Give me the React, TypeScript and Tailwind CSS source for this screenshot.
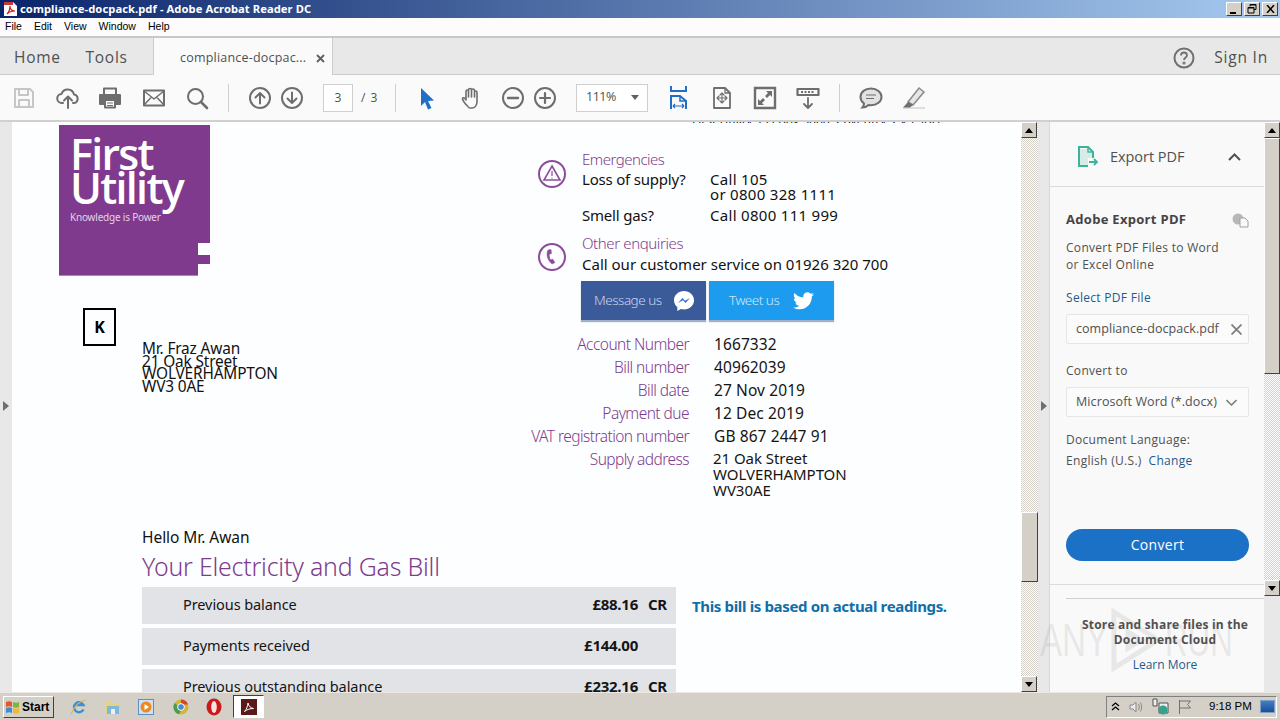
import React from "react";

const ui = "font-['Open_Sans',sans-serif]";
const doc = "font-['Noto_Sans',sans-serif]";

function Tb({ children, w = 24 }: { children: React.ReactNode; w?: number }) {
  return (
    <svg width={w} height="24" viewBox="0 0 24 24" fill="none" stroke="#6e6e6e" strokeWidth="2" strokeLinecap="round" strokeLinejoin="round" className="shrink-0">
      {children}
    </svg>
  );
}

function WinBtn({ children }: { children: React.ReactNode }) {
  return (
    <div className="w-4 h-[14px] bg-[#d4d0c8] border border-t-white border-l-white border-r-[#404040] border-b-[#404040] flex items-center justify-center">
      {children}
    </div>
  );
}

function ScrollBtn({ up }: { up?: boolean }) {
  return (
    <div className="w-[16px] h-[16px] shrink-0 bg-[#d4d0c8] border border-t-white border-l-white border-r-[#404040] border-b-[#404040] flex items-center justify-center">
      <svg width="8" height="5" viewBox="0 0 8 5"><path d={up ? "M4 0 L8 5 L0 5Z" : "M0 0 L8 0 L4 5Z"} fill="#000" /></svg>
    </div>
  );
}

const track = "bg-[repeating-conic-gradient(#d4d0c8_0_25%,#ffffff_0_50%)] bg-[length:2px_2px]";

function Row({ label, value, cr }: { label: string; value: string; cr?: boolean }) {
  return (
    <div className="h-[37px] shrink-0 bg-[#e1e3e6] flex items-center pb-[2px] text-[14.5px] text-[#151515] pl-[41px]">
      <span className="flex-1 tracking-[-0.08px]">{label}</span>
      <span className="font-bold text-[15px] tracking-[-0.25px] w-[62px] text-right whitespace-nowrap">{value}</span>
      <span className="font-bold text-[15px] w-[38px] pl-[10px] tracking-[-0.3px]">{cr ? "CR" : ""}</span>
    </div>
  );
}

function Info({ label, value }: { label: string; value: React.ReactNode }) {
  return (
    <div className="flex">
      <div className="w-[159px] text-right text-[#7d3c8c] tracking-[-0.55px] font-light">{label}</div>
      <div className="ml-[25px] text-[#151515] tracking-[0.1px]">{value}</div>
    </div>
  );
}

function App() {
  return (
    <div className="w-[1280px] h-[720px] overflow-hidden flex flex-col bg-[#d4d0c8] relative">
      {/* Title bar */}
      <div className="h-[18px] shrink-0 bg-[linear-gradient(90deg,#0a246a,#a6caf0)] flex items-center pl-[3px] pr-[2px]">
        <svg width="15" height="16" viewBox="0 0 15 16" className="mr-[2px] shrink-0">
          <path d="M1 1h9l4 4v10H1z" fill="#fff" />
          <path d="M1 1h9v3H1z" fill="#c43a3a" />
          <path d="M4 13c2-2 3-5 3-8 0 3 2 5 5 5-3 0-6 1-8 3z" fill="none" stroke="#c8201e" strokeWidth="1.2" />
        </svg>
        <div className="flex-1 text-white font-bold text-[11.2px] tracking-[0.07px] font-['Noto_Sans',sans-serif] whitespace-nowrap leading-[18px]">
          compliance-docpack.pdf - Adobe Acrobat Reader DC
        </div>
        <div className="flex">
          <WinBtn><div className="w-[6px] h-[2px] bg-black mt-[7px] mr-[2px]" /></WinBtn>
          <div className="w-[2px]" />
          <WinBtn>
            <svg width="10" height="10" viewBox="0 0 10 10" fill="none" stroke="#000"><path d="M3 2.5V.5h6v5H7" /><path d="M1 3.5h6v5.5H1z" /><path d="M3 1h6M1 4h6" /></svg>
          </WinBtn>
          <div className="w-[2px]" />
          <WinBtn>
            <svg width="9" height="8" viewBox="0 0 9 8" fill="none" stroke="#000" strokeWidth="1.5"><path d="M1 0l7 8M8 0L1 8" /></svg>
          </WinBtn>
        </div>
      </div>

      {/* Menu bar */}
      <div className="h-[20px] shrink-0 bg-[#fdfbfb] border-b-2 border-[#c8c8c8] flex items-center pl-[5px] text-[10.5px] text-black font-['Liberation_Sans',sans-serif] gap-[12px]">
        <span>File</span><span>Edit</span><span>View</span><span>Window</span><span>Help</span>
      </div>

      {/* Tabs */}
      <div className={`h-[37px] shrink-0 bg-[#e8e8e8] border-b border-[#cdcdcd] flex items-stretch ${ui} relative`}>
        <div className="w-[154px] flex items-center pl-[14px] pt-[4px] gap-[25px] text-[15.5px] text-[#505050] tracking-[0.7px] border-r border-[#cdcdcd]">
          <span>Home</span><span>Tools</span>
        </div>
        <div className="w-[179px] h-[37px] bg-[#fafafa] border-r border-[#cdcdcd] flex items-center pl-[26px] pt-[4px] text-[12.5px] text-[#505050] tracking-[0.2px]">
          <span className="w-[136px] whitespace-nowrap">compliance-docpac...</span>
          <svg width="9" height="9" viewBox="0 0 9 9" stroke="#606060" strokeWidth="1.8"><path d="M1 1l7 7M8 1L1 8" /></svg>
        </div>
        <div className="flex-1 flex items-center justify-end pr-[12px] pt-[4px] gap-[19px]">
          <svg width="22" height="22" viewBox="0 0 22 22" fill="none" stroke="#707070" strokeWidth="2"><circle cx="11" cy="11" r="9.5" /><path d="M8 8.5c0-4 6-4 6 0 0 2-3 2-3 4.5" strokeWidth="1.8" /><circle cx="11" cy="16" r=".6" /></svg>
          <span className="text-[15.5px] text-[#505050] tracking-[0.8px]">Sign In</span>
        </div>
      </div>

      {/* Toolbar */}
      <div className={`h-[47px] shrink-0 bg-[#fafafa] border-b-2 border-[#d0d0d0] flex items-center pl-[12px] ${ui} text-[#505050]`}>
        <Tb><path d="M3 3h15l3 3v15H3z" stroke="#c6c6c6" /><path d="M7 3v6h9V3M7 21v-7h10v7" stroke="#c6c6c6" /></Tb>
        <div className="ml-[20px]">
          <Tb><path d="M7 17H6a4.5 4.5 0 0 1-.5-9A6.500 6.500 0 0 1 18 8.500a4.300 4.300 0 0 1 0 8.500h-1" /><path d="M12 22V11M8 14.500l4-4 4 4" /></Tb>
        </div>
        <div className="ml-[18px]">
          <Tb><path d="M6 8V2.500h12V8" /><path d="M2 9h20v9H2z" fill="#6e6e6e" /><path d="M7 14h10v7.500H7z" fill="#fafafa" /><path d="M9.500 17h5M9.500 19.500h5" strokeWidth="1" /></Tb>
        </div>
        <div className="ml-[20px]">
          <Tb><path d="M2 4.500h20v15H2z" /><path d="M2 5l10 8 10-8M2 19l7.500-8M22 19l-7.500-8" strokeWidth="1.500" /></Tb>
        </div>
        <div className="ml-[19px]">
          <Tb><circle cx="10.500" cy="10.500" r="7.500" /><path d="M16 16l6 6" strokeWidth="2.600" /></Tb>
        </div>
        <div className="w-px h-[28px] bg-[#cfcfcf] ml-[19px]" />
        <div className="ml-[19px] flex gap-[8px]">
          <Tb><circle cx="12" cy="12" r="10" /><path d="M12 17.500V7M7.500 11.500L12 7l4.500 4.500" /></Tb>
          <Tb><circle cx="12" cy="12" r="10" /><path d="M12 6.500V17M7.500 12.500L12 17l4.500-4.500" /></Tb>
        </div>
        <div className="ml-[19px] w-[30px] h-[28px] border border-[#cfcfcf] bg-white flex items-center justify-center text-[12px]">3</div>
        <div className="ml-[8px] text-[12px] w-[16px] whitespace-nowrap tracking-[1px]">/ 3</div>
        <div className="w-px h-[28px] bg-[#cfcfcf] ml-[18px]" />
        <div className="ml-[20px]">
          <svg width="24" height="24" viewBox="0 0 24 24"><path d="M5 2l13 12.500-6 .5 3.500 7-3.500 1.500-3-7.500L5 20z" fill="#1f6fc6" /></svg>
        </div>
        <div className="ml-[20px]">
          <Tb><path d="M7.500 20c-2-2-4.500-5-5-7 0-2 2-1.500 3.500 1V5.500c0-2 2.500-2 2.500 0V11V4c0-2 3-2 3 0v7V4.500c0-2 3-2 3 0V11V6.500c0-2 2.500-2 2.500 0V16c0 3-2 6-5 6h-2c-1.500 0-2-1-2.500-2z" strokeWidth="1.600" /></Tb>
        </div>
        <div className="ml-[17px] flex gap-[8px]">
          <Tb><circle cx="12" cy="12" r="10" /><path d="M7 12h10" strokeWidth="2.400" /></Tb>
          <Tb><circle cx="12" cy="12" r="10" /><path d="M7 12h10M12 7v10" strokeWidth="2.200" /></Tb>
        </div>
        <div className="ml-[19px] w-[72px] h-[28px] border border-[#cfcfcf] bg-white flex items-center pl-[9px] text-[12.5px] tracking-[-0.5px]">
          <span className="flex-1">111%</span>
          <div className="w-0 h-0 border-x-[4px] border-x-transparent border-t-[5px] border-t-[#606060] mr-[8px]" />
        </div>
        <div className="ml-[19px]">
          <svg width="24" height="26" viewBox="0 0 24 26" fill="none" stroke="#1f6fc6" strokeWidth="2"><path d="M4 1v5h15V1" /><path d="M4 24V11h9l6 5v8" /><path d="M13 11v5h6" strokeWidth="1.500" /><path d="M6 21h11M6 21l2-2M6 21l2 2M17 21l-2-2M17 21l-2 2" strokeWidth="1.200" /></svg>
        </div>
        <div className="ml-[19px]">
          <Tb><path d="M4 2h11l5 5v15H4z" strokeWidth="1.800" /><path d="M15 2v5h5" strokeWidth="1.300" /><path d="M12 7v10M7 12h10M12 7l-2 2M12 7l2 2M12 17l-2-2M12 17l2-2M7 12l2-2M7 12l2 2M17 12l-2-2M17 12l-2 2" strokeWidth="1.100" /></Tb>
        </div>
        <div className="ml-[19px]">
          <svg width="24" height="24" viewBox="0 0 24 24"><path d="M2 2h20v20H2z" fill="none" stroke="#6e6e6e" strokeWidth="2.400" /><path d="M13 5h6v6l-2-2-3 3-2-2 3-3zM11 19H5v-6l2 2 3-3 2 2-3 3z" fill="#6e6e6e" /></svg>
        </div>
        <div className="ml-[19px]">
          <Tb><path d="M1.500 3h21v6h-21z" strokeWidth="2.200" /><path d="M5 6h14" strokeDasharray="2 1.500" strokeWidth="2" strokeLinecap="butt" /><path d="M12 12v10M8 18l4 4 4-4" strokeWidth="1.800" /></Tb>
        </div>
        <div className="w-px h-[28px] bg-[#cfcfcf] ml-[19px]" />
        <div className="ml-[19px]">
          <svg width="24" height="24" viewBox="0 0 24 24"><path d="M12 2.500C6 2.500 1.500 6 1.500 11c0 3 1.500 5 3.500 6.500 0 1.500-.5 3-1.500 4 2.500 0 4.500-1 6-2.500 1 .2 1.500.2 2.500.2 6 0 10.500-3.700 10.500-8.200S18 2.500 12 2.500z" fill="#e2e2e2" stroke="#6e6e6e" strokeWidth="2" /><path d="M7 9h10M7 12.500h8" stroke="#6e6e6e" /></svg>
        </div>
        <div className="ml-[18px]">
          <svg width="26" height="24" viewBox="0 0 26 24"><path d="M2 21h22v2H2z" fill="#dedede" /><path d="M7 16L18 2l5 4-11 13z" fill="#e6e6e6" stroke="#8a8a8a" strokeWidth="1.500" /><path d="M7 16l5 3-3 2.500H2z" fill="#707070" /></svg>
        </div>
      </div>

      {/* Main */}
      <div className="flex-1 min-h-0 flex bg-[#e8e8e8]">
        <div className="w-[12px] shrink-0 flex items-center">
          <div className="w-0 h-0 border-y-[5px] border-y-transparent border-l-[6px] border-l-[#6f6f6f] ml-[3px] mt-[-2px]" />
        </div>

        {/* PDF page */}
        <div className={`w-[1009px] shrink-0 bg-[#fdfeff] overflow-hidden ${doc} pl-[47px]`}>
          <div className="flex h-[400px]">
            <div className="w-[471px] shrink-0 pt-[3px]">
              <div className="w-[151px] h-[151px] bg-[#7f3a8e] relative pl-[11px] pt-[12px] border-b border-[#b183bc]">
                <div className="text-white text-[43px] leading-[34px] font-semibold tracking-[-1.7px] font-['Open_Sans',sans-serif]">First<br />Utility</div>
                <div className="text-[#e3d2e8] text-[10px] leading-[12px] mt-[6px] tracking-[-0.2px] whitespace-nowrap">Knowledge is Power</div>
                <div className="absolute right-0 top-[118px] w-[12px] h-[12px] bg-[#fdfeff]" />
                <div className="absolute right-0 bottom-[-1px] w-[12px] h-[12px] bg-[#fdfeff]" />
              </div>
              <div className="flex mt-[32px] ml-[24px]">
                <div className="w-[33px] h-[38px] border-2 border-black flex items-center justify-center font-bold text-[16px] text-black shrink-0">K</div>
                <div className="ml-[26px] mt-[35px] text-[15.4px] leading-[12.7px] text-[#111] tracking-[-0.15px] whitespace-nowrap">
                  Mr. Fraz Awan<br />21 Oak Street<br />WOLVERHAMPTON<br />WV3 0AE
                </div>
              </div>
            </div>
            <div className="w-[480px] text-[15px] text-[#111]">
              <div className="h-[9px] mt-[-8px] pl-[162px] text-[12px] leading-[14px] whitespace-nowrap overflow-hidden">
                First Utility, PO Box 3666, Coventry, CV3 9BH
              </div>
              <div className="h-[21px]" />
              <div className="flex">
                <svg width="30" height="30" viewBox="0 0 30 30" fill="none" stroke="#8a4d98" strokeWidth="2" className="ml-[7px] mt-[15px] shrink-0">
                  <circle cx="15" cy="15" r="13" /><path d="M15 7L23 21H7z" strokeWidth="1.600" /><path d="M15 12v5M15 18.500v1" strokeWidth="1.200" />
                </svg>
                <div className="ml-[15px] whitespace-nowrap">
                  <div className="text-[#7d3c8c] text-[15px] leading-[16px] font-light tracking-[-0.5px] pt-[7px]">Emergencies</div>
                  <div className="flex mt-[5px] leading-[15px]"><span className="w-[128px] tracking-[-0.2px]">Loss of supply?</span><span className="tracking-[0.3px]">Call 105<br />or 0800 328 1111</span></div>
                  <div className="flex mt-[6px] leading-[15px]"><span className="w-[128px] tracking-[-0.2px]">Smell gas?</span><span className="tracking-[0.3px]">Call 0800 111 999</span></div>
                </div>
              </div>
              <div className="flex mt-[12px]">
                <svg width="30" height="30" viewBox="0 0 30 30" fill="none" stroke="#8a4d98" strokeWidth="2" className="ml-[7px] mt-[7px] shrink-0">
                  <circle cx="15" cy="15" r="13" /><path d="M11 8c-2 4-1 10 4 14l3-1.500-2.500-3.500-2 1c-1-2-1.500-4-1-6l2-.5-.5-4z" fill="#8a4d98" strokeWidth=".5" />
                </svg>
                <div className="ml-[15px] leading-[16px] whitespace-nowrap">
                  <div className="text-[#7d3c8c] text-[15px] font-light tracking-[-0.4px]">Other enquiries</div>
                  <div className="mt-[5px]">Call our customer service on 01926 320 700</div>
                </div>
              </div>
              <div className="flex gap-[3px] ml-[51px] mt-[9px]">
                <div className="w-[125px] h-[39px] bg-[#3a5a9a] shadow-[0_2px_1px_#9fb0c8] flex items-center pl-[13px] text-[13.5px] text-[#c9d6ea] tracking-[-0.5px] font-light">
                  <span className="w-[79px]">Message us</span>
                  <svg width="22" height="22" viewBox="0 0 22 22"><path d="M11 1C5.500 1 1 5 1 10.200c0 2.800 1.300 5.200 3.300 6.800v4l3.600-2c1 .3 2 .4 3.100.4 5.500 0 10-4 10-9.200S16.500 1 11 1z" fill="#fff" /><path d="M5 13l4.500-5 2.500 2.700L17 8l-4.500 5-2.500-2.700z" fill="#2f6fd0" /></svg>
                </div>
                <div className="w-[125px] h-[39px] bg-[#1d9bee] shadow-[0_2px_1px_#9fb0c8] flex items-center pl-[20px] text-[13.5px] text-[#cfe8fa] tracking-[-0.5px] font-light">
                  <span className="w-[64px]">Tweet us</span>
                  <svg width="21" height="18" viewBox="0 0 24 20"><path d="M24 2.400c-.9.400-1.800.700-2.800.8 1-.6 1.800-1.600 2.200-2.700-1 .6-2 1-3.100 1.200C19.300.7 18 0 16.600 0c-2.700 0-4.900 2.200-4.900 4.900 0 .4 0 .8.100 1.100C7.700 5.800 4.100 3.900 1.700.9 1.200 1.600 1 2.500 1 3.400c0 1.700.9 3.200 2.200 4.100-.8 0-1.600-.2-2.200-.6v.1c0 2.400 1.700 4.400 3.900 4.800-.4.100-.8.200-1.300.2-.3 0-.6 0-.9-.1.600 2 2.400 3.400 4.600 3.400-1.700 1.300-3.800 2.100-6.100 2.100-.4 0-.8 0-1.200-.1C2.200 18.700 4.800 19.500 7.500 19.500c9.100 0 14-7.500 14-14v-.6c1-.7 1.800-1.600 2.500-2.500z" fill="#fff" /></svg>
                </div>
              </div>
              <div className="mt-[13px] text-[15.5px] leading-[23.1px] whitespace-nowrap">
                <Info label="Account Number" value="1667332" />
                <Info label="Bill number" value="40962039" />
                <Info label="Bill date" value="27 Nov 2019" />
                <Info label="Payment due" value="12 Dec 2019" />
                <Info label="VAT registration number" value="GB 867 2447 91" />
                <Info label="Supply address" value={<div className="leading-[16px] mt-[2px] text-[15px] tracking-[-0.05px] ml-[-1px]">21 Oak Street<br />WOLVERHAMPTON<br />WV30AE</div>} />
              </div>
            </div>
          </div>
          <div className="ml-[83px] flex">
            <div className="w-[534px] shrink-0">
              <div className="text-[15.5px] leading-[18px] text-[#111] tracking-[-0.05px] mt-[6px]">Hello Mr. Awan</div>
              <div className="text-[24.9px] leading-[32px] text-[#7d3c8c] font-light tracking-[-0.2px] mt-[4px] mb-[5px] whitespace-nowrap">Your Electricity and Gas Bill</div>
              <div className="flex flex-col gap-[4px]">
                <Row label="Previous balance" value="£88.16" cr />
                <Row label="Payments received" value="£144.00" />
                <Row label="Previous outstanding balance" value="£232.16" cr />
              </div>
            </div>
            <div className="ml-[16px] mt-[74px] text-[15px] leading-[20px] font-bold text-[#0f6fa8] tracking-[-0.35px] whitespace-nowrap">This bill is based on actual readings.</div>
          </div>
        </div>

        {/* doc scrollbar */}
        <div className={`w-[17px] shrink-0 flex flex-col ${track}`}>
          <ScrollBtn up />
          <div className="flex-1" />
          <div className="h-[70px] bg-[#d4d0c8] border border-t-white border-l-white border-r-[#404040] border-b-[#404040]" />
          <div className="h-[94px]" />
          <ScrollBtn />
        </div>

        {/* gap with arrow */}
        <div className="w-[12px] shrink-0 flex items-center border-r border-[#d8d8d8]">
          <div className="w-0 h-0 border-y-[5px] border-y-transparent border-l-[6px] border-l-[#6f6f6f] ml-[3px] mt-[-2px]" />
        </div>

        {/* Right panel */}
        <div className={`flex-1 min-w-0 flex relative ${ui}`}>
          <div className="w-[214px] shrink-0 flex flex-col bg-[#f9f9f9] text-[#505050]">
            <div className="h-[65px] shrink-0 border-b border-[#dcdcdc] flex items-center pt-[6px] pl-[27px] pr-[23px]">
              <svg width="22" height="22" viewBox="0 0 22 22" fill="none" stroke="#3fb39a" strokeWidth="2"><path d="M11 20H2V1h9l5 5v6" /><path d="M11 1v5h5" strokeWidth="1.500" /><path d="M3 3h7v4h5v5h-4v7H3z" fill="#d8ece7" stroke="none" /><path d="M12 16h8M17 13l3 3-3 3" strokeWidth="1.800" /></svg>
              <span className="ml-[11px] flex-1 text-[14.5px] tracking-[-0.05px]">Export PDF</span>
              <svg width="13" height="8" viewBox="0 0 13 8" fill="none" stroke="#505050" strokeWidth="2"><path d="M1 7l5.500-5.500L12 7" /></svg>
            </div>
            <div className="flex-1 min-h-0 pl-[16px] pr-[15px] text-[12px] tracking-[0.3px]">
              <div className="flex items-center mt-[24px] h-[18px]">
                <span className="flex-1 font-bold text-[13px] text-[#444] tracking-[0.3px]">Adobe Export PDF</span>
                <svg width="17" height="15" viewBox="0 0 17 15"><circle cx="6" cy="6" r="5.500" fill="#b8b8b8" /><path d="M8 5h5l3 3v6H8z" fill="#f9f9f9" stroke="#a0a0a0" /></svg>
              </div>
              <div className="mt-[10px] leading-[17px]">Convert PDF Files to Word<br />or Excel Online</div>
              <div className="mt-[16px] leading-[17px] text-[#1d5a8e]">Select PDF File</div>
              <div className="mt-[8px] h-[30px] border border-[#e6e6e6] bg-[#fbfbfb] rounded-[2px] flex items-center pl-[9px] pr-[6px] text-[12.5px] tracking-[0.05px] whitespace-nowrap">
                <span className="flex-1">compliance-docpack.pdf</span>
                <svg width="11" height="11" viewBox="0 0 11 11" stroke="#808080" strokeWidth="1.800"><path d="M.5.500l10 10M10.500.500l-10 10" /></svg>
              </div>
              <div className="mt-[18px] leading-[17px]">Convert to</div>
              <div className="mt-[8px] h-[30px] border border-[#e6e6e6] bg-[#fbfbfb] rounded-[2px] flex items-center pl-[9px] pr-[11px] text-[12.5px] tracking-[0.1px] whitespace-nowrap">
                <span className="flex-1">Microsoft Word (*.docx)</span>
                <svg width="11" height="7" viewBox="0 0 11 7" fill="none" stroke="#808080" strokeWidth="1.600"><path d="M.5 1l5 5 5-5" /></svg>
              </div>
              <div className="mt-[14px] leading-[17px]">Document Language:</div>
              <div className="mt-[4px] leading-[17px]">English (U.S.)&nbsp; <span className="text-[#1d5a8e]">Change</span></div>
              <div className="mt-[60px] h-[32px] rounded-full bg-[#1b71c6] flex items-center justify-center pb-[1px] text-white text-[14px]">Convert</div>
            </div>
            <div className="h-[108px] shrink-0 border-t border-[#dcdcdc] pt-[13px] text-[12px]">
              <div className="ml-[16px] border-t border-[#d0d0d0] pt-[19px] text-center font-bold text-[#505050] leading-[14.5px] tracking-[0.2px]">
                Store and share files in the<br />Document Cloud
              </div>
              <div className="text-center text-[#1d5a8e] mt-[10px] ml-[16px] leading-[15px]">Learn More</div>
            </div>
          </div>
          <div className="flex-1 flex flex-col">
            <div className={`h-[474px] flex flex-col ${track}`}>
              <ScrollBtn up />
              <div className="h-[236px] bg-[#d4d0c8] border border-t-white border-l-white border-r-[#404040] border-b-[#404040]" />
              <div className="flex-1" />
              <ScrollBtn />
            </div>
          </div>
        </div>
      </div>

      {/* Taskbar */}
      <div className="h-[28px] shrink-0 bg-[#d4d0c8] border-t border-[#ece9e2] flex items-center pl-[3px] relative">
        <div className="w-[51px] h-[22px] border border-t-white border-l-white border-r-[#404040] border-b-[#404040] flex items-center pl-[1px] font-bold text-[12px] text-black font-['Liberation_Sans',sans-serif]">
          <svg width="16" height="16" viewBox="0 0 16 16" className="shrink-0"><path d="M1 3c2-1 4-1 6 0v5c-2-1-4-1-6 0z" fill="#e2582a" /><path d="M8 3c2 1 4 1 6 0v5c-2 1-4 1-6 0z" fill="#7fb53c" /><path d="M1 9c2-1 4-1 6 0v5c-2-1-4-1-6 0z" fill="#3e8ed6" /><path d="M8 9c2 1 4 1 6 0v5c-2 1-4 1-6 0z" fill="#f2b92e" /></svg>
          <span className="ml-[1px]">Start</span>
        </div>
        <div className="ml-[16px] flex items-center">
          <svg width="18" height="18" viewBox="0 0 18 18" fill="none"><path d="M13.500 11.500a5 5 0 1 1 0-4.500H4.500" stroke="#3a8fd8" strokeWidth="2.400" /><path d="M1 16c3-7 8-13 15-14" stroke="#e5b93c" strokeWidth="1.200" /></svg>
          <svg width="16" height="16" viewBox="0 0 16 16" className="ml-[17px]"><path d="M1 3h5l1 2h8v10H1z" fill="#e9d27f" /><path d="M2 7h12v8H2z" fill="#7fb8d8" /><path d="M6 10h4v5H6z" fill="#e9f1f6" /></svg>
          <svg width="16" height="16" viewBox="0 0 16 16" className="ml-[17px]"><rect x=".5" y=".5" width="15" height="15" fill="#cfe0f2" stroke="#5d8fc4" /><circle cx="8" cy="8" r="5.500" fill="#ea8a1f" /><path d="M6.500 5v6l4.500-3z" fill="#fff" /></svg>
          <svg width="16" height="16" viewBox="0 0 16 16" className="ml-[19px]"><circle cx="8" cy="8" r="7.500" fill="#d8b52a" /><path d="M8 .5A7.500 7.500 0 0 1 15 5.500H8z" fill="#d6432f" /><path d="M1.600 4A7.500 7.500 0 0 0 6 15.300L9 10z" fill="#4c9c4c" /><circle cx="8" cy="8" r="3.400" fill="#4a88d8" stroke="#fff" /></svg>
          <svg width="16" height="18" viewBox="0 0 16 18" className="ml-[17px]"><ellipse cx="8" cy="9" rx="7.500" ry="8.500" fill="#cc1a1a" /><ellipse cx="8" cy="9" rx="2.800" ry="6" fill="#f4e4e4" /></svg>
        </div>
        <div className="ml-[11px] w-[31px] h-[23px] bg-white border border-t-[#404040] border-l-[#404040] border-r-white border-b-white flex items-center justify-center">
          <div className="w-[16px] h-[16px] bg-[#5a1a1a] flex items-center justify-center">
            <svg width="12" height="12" viewBox="0 0 12 12" fill="none" stroke="#fff" strokeWidth="1"><path d="M1.500 10.500c2-2 3-5 3.500-8.500.5 3 2.500 5 5.500 5.500-3.500 0-6.500 1-9 3z" /></svg>
          </div>
        </div>
        <div className="ml-auto mr-[3px] w-[171px] h-[22px] border border-t-[#808080] border-l-[#808080] border-r-white border-b-white flex items-center pl-[4px] text-[11.5px] text-black font-['Liberation_Sans',sans-serif] whitespace-nowrap">
          <svg width="9" height="9" viewBox="0 0 9 9" fill="none" stroke="#000" strokeWidth="1.300" className="shrink-0"><path d="M1 4l3.500-3L8 4M1 8l3.500-3L8 8" /></svg>
          <svg width="16" height="16" viewBox="0 0 16 16" fill="none" stroke="#8a8a8a" className="ml-[8px] shrink-0"><path d="M2 6h3l3-3v10l-3-3H2z" fill="#e8e8e8" /><path d="M10.500 5c1 2 1 4 0 6M12.500 3.500c1.500 3 1.500 6 0 9" /></svg>
          <svg width="17" height="17" viewBox="0 0 17 17" className="ml-[8px] shrink-0"><path d="M1 1h4v7H1zM7 5h9v10H7z" fill="#eeeeee" stroke="#505050" /><circle cx="11" cy="12" r="4.500" fill="#35a28c" /></svg>
          <svg width="16" height="16" viewBox="0 0 16 16" fill="none" stroke="#707070" className="ml-[8px] shrink-0"><path d="M2.500 1v14M2.500 2h11l-3 3.500 3 3.500h-11" /></svg>
          <span className="ml-[16px] w-[40px] shrink-0">9:18 PM</span>
          <div className="ml-[11px] w-[15px] h-[13px] shrink-0 bg-[linear-gradient(180deg,#3f7fc8,#1d4f94)] border border-[#7f9fc4]" />
        </div>
      </div>

      {/* Watermark */}
      <div className="absolute left-[1040px] top-[608px] h-[64px] flex items-center pointer-events-none font-['Liberation_Sans',sans-serif] text-[46px] leading-[64px] text-[#777777]/15">
        <div className="w-[68px]"><span className="inline-block origin-left scale-x-[0.72]">ANY</span></div>
        <svg width="57" height="64" viewBox="0 0 57 64" fill="none" stroke="#777777" strokeOpacity=".13" strokeWidth="5"><path d="M6 4l44 28L6 60z" /><path d="M20 24l13 8-13 8z" /></svg>
        <div className="w-[68px]"><span className="inline-block origin-left scale-x-[0.68]">RUN</span></div>
      </div>
    </div>
  );
}

export default App;
